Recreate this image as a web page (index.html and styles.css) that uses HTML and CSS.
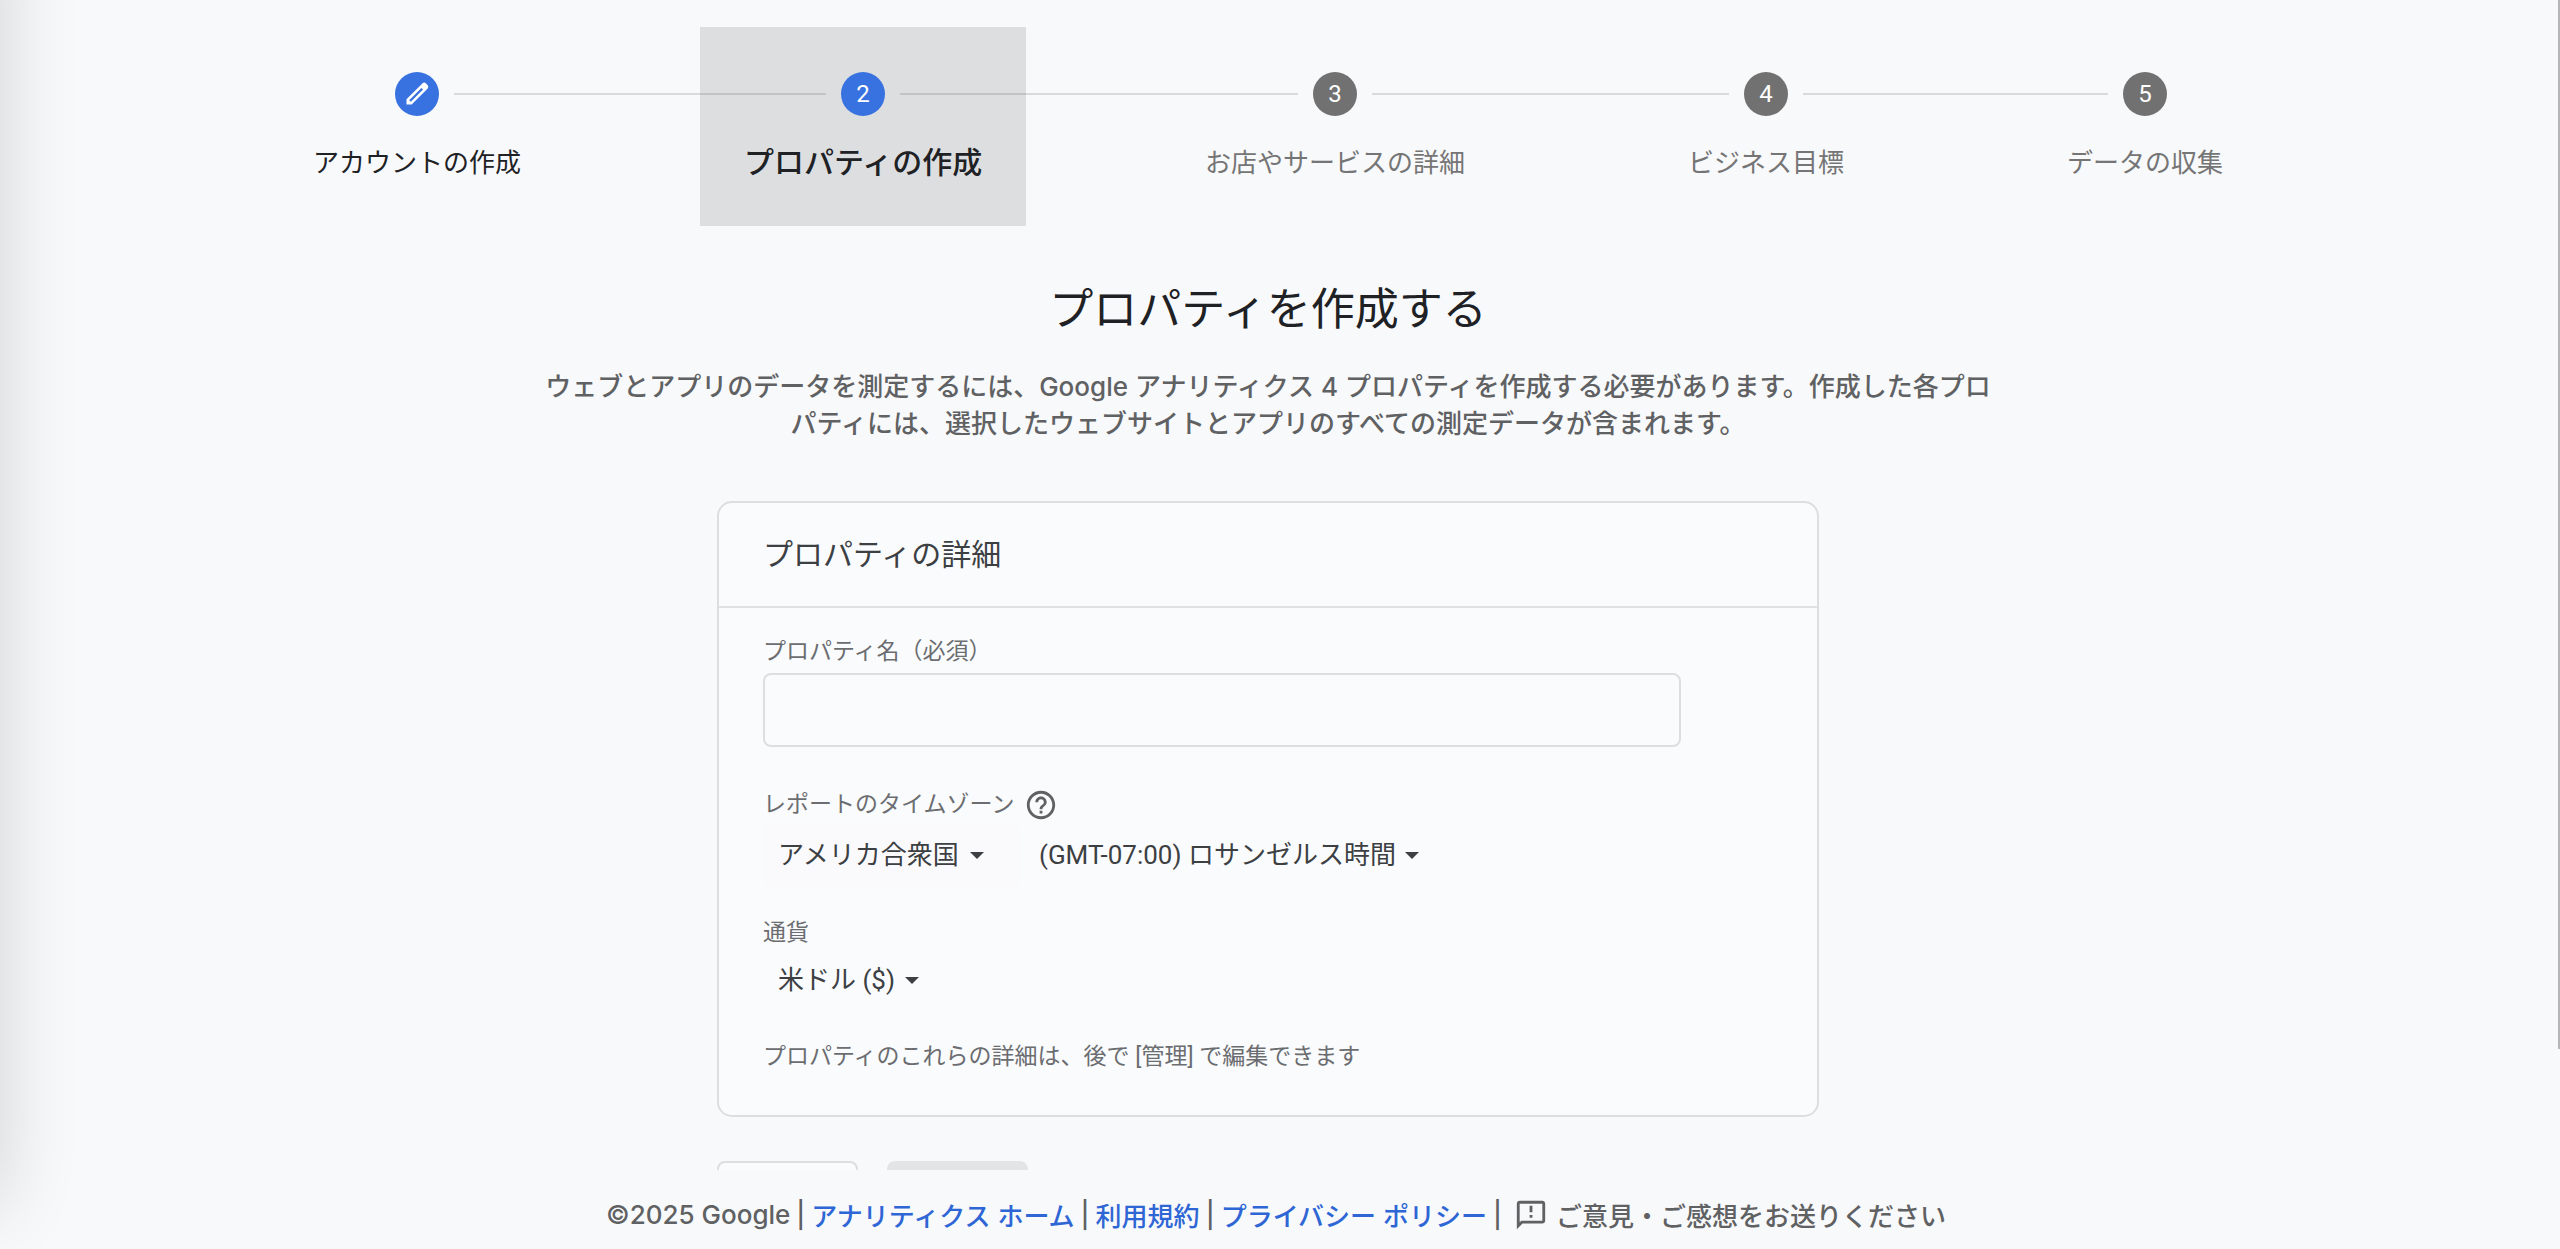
FILE: index.html
```html
<!DOCTYPE html>
<html lang="ja">

<head>
    <meta charset="UTF-8">
    <meta name="viewport" content="width=device-width, initial-scale=1.0">
    <title>プロパティの作成</title>
    <link rel="stylesheet" href="styles.css">
</head>

<body>
    <div class="side-shadow"></div>
    <div class="scroll-thumb"></div>

    <main class="main">
        <!-- ステッパー -->
        <ol class="stepper">
            <li class="step done">
                <div class="track">
                    <span class="circle">
                        <svg viewBox="0 0 24 24" width="28" height="28">
                            <path d="M3 21v-4.400L16.600 3a2.200 2.200 0 0 1 3.100 0l1.300 1.300a2.200 2.200 0 0 1 0 3.100L7.400 21z" fill="#fff" />
                            <path d="M6 18L16.500 7.500" stroke="#3871e0" stroke-width="2" />
                        </svg>
                    </span>
                </div>
                <div class="label">アカウントの作成</div>
            </li>
            <li class="connector"></li>
            <li class="step active">
                <div class="track"><span class="circle">2</span></div>
                <div class="label">プロパティの作成</div>
            </li>
            <li class="connector"></li>
            <li class="step">
                <div class="track"><span class="circle">3</span></div>
                <div class="label">お店やサービスの詳細</div>
            </li>
            <li class="connector"></li>
            <li class="step">
                <div class="track"><span class="circle">4</span></div>
                <div class="label">ビジネス目標</div>
            </li>
            <li class="connector"></li>
            <li class="step">
                <div class="track"><span class="circle">5</span></div>
                <div class="label">データの収集</div>
            </li>
        </ol>

        <h1 class="title">プロパティを作成する</h1>
        <p class="description">ウェブとアプリのデータを測定するには、Google アナリティクス 4 プロパティを作成する必要があります。作成した各プロ<br>パティには、選択したウェブサイトとアプリのすべての測定データが含まれます。</p>

        <form class="form">
            <div class="card">
                <h2 class="card-title">プロパティの詳細</h2>
                <div class="card-body">
                    <label class="field-label" for="name">プロパティ名（必須）</label>
                    <input class="text-input" id="name" type="text">

                    <div class="timezone-label">
                        <label class="field-label" for="country">レポートのタイムゾーン</label>
                        <svg viewBox="0 0 24 24" width="34" height="34" fill="#5f6163">
                            <path d="M11 18h2v-2h-2v2zm1-16C6.480 2 2 6.480 2 12s4.480 10 10 10 10-4.480 10-10S17.520 2 12 2zm0 18c-4.410 0-8-3.590-8-8s3.590-8 8-8 8 3.590 8 8-3.590 8-8 8zm0-14c-2.210 0-4 1.790-4 4h2c0-1.100.9-2 2-2s2 .9 2 2c0 2-3 1.750-3 5h2c0-2.250 3-2.500 3-5 0-2.210-1.790-4-4-4z" />
                        </svg>
                    </div>
                    <div class="select-row">
                        <div class="select-box filled">
                            <select id="country">
                                <option>アメリカ合衆国</option>
                            </select>
                        </div>
                        <div class="select-box">
                            <select aria-label="タイムゾーン">
                                <option>(GMT-07:00) ロサンゼルス時間</option>
                            </select>
                        </div>
                    </div>

                    <label class="field-label" for="currency">通貨</label>
                    <div class="select-row currency">
                        <div class="select-box">
                            <select id="currency">
                                <option>米ドル ($)</option>
                            </select>
                        </div>
                    </div>

                    <p class="hint">プロパティのこれらの詳細は、後で [管理] で編集できます</p>
                </div>
            </div>
            <div class="actions">
                <button class="btn" type="button" aria-label="戻る"></button>
                <button class="btn next" type="button" aria-label="次へ" disabled></button>
            </div>
        </form>
    </main>

    <!-- フッター -->
    <footer class="footer">
        <span>©2025 Google</span>
        <span>|</span>
        <a href="#">アナリティクス ホーム</a>
        <span>|</span>
        <a href="#">利用規約</a>
        <span>|</span>
        <a href="#">プライバシー ポリシー</a>
        <span>|</span>
        <button class="feedback" type="button">
            <svg viewBox="0 0 24 24" width="34" height="34" fill="#5f6163">
                <path d="M20 2H4c-1.100 0-1.990.9-1.990 2L2 22l4-4h14c1.100 0 2-.9 2-2V4c0-1.100-.9-2-2-2zm0 14H5.170L4 17.170V4h16v12zM11 5.500h2v4.500h-2zm0 6.500h2v2h-2z" />
            </svg>
            ご意見・ご感想をお送りください
        </button>
    </footer>
</body>

</html>
```
FILE: styles.css
```css
* {
    margin: 0;
    padding: 0;
    box-sizing: border-box;
    list-style: none;
}

body {
    height: 100vh;
    display: flex;
    flex-direction: column;
    overflow: hidden;
    background: #f8f9fb;
    color: #5f6163;
    font-family: Roboto, "Noto Sans CJK JP", sans-serif;
    font-size: 26px;
}

/* 左メニューの影 */
.side-shadow {
    position: fixed;
    top: -80px;
    bottom: 44px;
    left: -80px;
    width: 80px;
    box-shadow: 0 0 80px rgba(0, 0, 0, 0.16);
}

.scroll-thumb {
    position: fixed;
    top: 0;
    right: 0;
    width: 2px;
    height: 84%;
    background: #b5b6b8;
}

.main {
    flex: 1;
    min-height: 0;
    overflow: hidden;
    padding: 27px 24px 0 0;
}

.stepper {
    display: flex;
    max-width: 1998px;
    margin: 0 auto;
}

.step {
    padding-top: 45px;
    height: 199px;
    color: #757575;
}

.connector {
    flex: 1;
    height: 2px;
    margin-top: 66px;
    background: rgba(0, 0, 0, 0.12);
}

.track {
    display: flex;
    align-items: center;
    gap: 15px;
}

.track::before,
.track::after {
    content: '';
    flex: 1;
    height: 2px;
    background: rgba(0, 0, 0, 0.12);
}

/* 両端には線を出さない */
.step:first-child .track::before,
.step:last-child .track::after {
    background: none;
}

.circle {
    width: 44px;
    height: 44px;
    display: flex;
    align-items: center;
    justify-content: center;
    border-radius: 50%;
    background: #717171;
    color: #fff;
    font-size: 24px;
}

.done .circle,
.active .circle {
    background: #3871e0;
}

.label {
    padding: 26px 44px 0;
    line-height: 42px;
    white-space: nowrap;
}

.done .label {
    color: #202124;
}

.active {
    background: #dddee0;
}

.active .label {
    color: #202124;
    font-size: 30px;
    font-weight: 500;
}

.title {
    margin-top: 52px;
    color: #202124;
    font-size: 44px;
    font-weight: 400;
    line-height: 64px;
    text-align: center;
}

.description {
    margin-top: 26px;
    font-family: Inter, "Noto Sans CJK JP", sans-serif;
    font-weight: 500;
    line-height: 37px;
    text-align: center;
}

.form {
    max-width: 1102px;
    margin: 59px auto 0;
}

.card {
    border: 2px solid #dcdee0;
    border-radius: 15px;
    background: #fafbfd;
}

.card-title {
    padding: 0 44px;
    border-bottom: 2px solid #dfe1e3;
    color: #3c4043;
    font-size: 30px;
    font-weight: 400;
    line-height: 103px;
}

.card-body {
    padding: 26px 136px 40px 44px;
}

.field-label,
.hint {
    display: block;
    color: #6b6d70;
    font-size: 23px;
    line-height: 36px;
}

.text-input {
    display: block;
    width: 100%;
    height: 74px;
    margin-top: 3px;
    padding: 0 20px;
    border: 2px solid #dcdee0;
    border-radius: 8px;
    background: transparent;
    font: inherit;
}

.timezone-label {
    display: flex;
    align-items: center;
    gap: 10px;
    margin-top: 40px;
}

.select-row {
    display: flex;
    gap: 4px;
    margin: 0 0 28px;
}

.select-box {
    display: flex;
    align-items: center;
    gap: 9px;
    padding: 0 36px 0 15px;
    border-radius: 8px;
}

.select-box.filled {
    background: #fafafc;
}

.select-box::after {
    content: '';
    border: 7px solid transparent;
    border-top-color: #3c4043;
    border-bottom: none;
}

.select-box select {
    height: 64px;
    border: none;
    background: none;
    appearance: none;
    color: #3c4043;
    font: inherit;
}

.select-row.currency {
    margin: 0 0 30px;
}

.currency select {
    height: 58px;
}

.actions {
    display: flex;
    gap: 29px;
    margin-top: 44px;
}

.btn {
    width: 141px;
    height: 58px;
    border: 2px solid #dcdee0;
    border-radius: 8px;
    background: #fafbfd;
}

.btn.next {
    border-color: #e3e4e6;
    background: #e3e4e6;
}

.footer {
    display: flex;
    align-items: center;
    justify-content: center;
    gap: 6px;
    height: 79px;
    padding: 10px 8px 0 0;
    font-family: Inter, "Noto Sans CJK JP", sans-serif;
    font-weight: 500;
}

.footer a {
    color: #2f66d5;
    text-decoration: none;
}

.feedback {
    display: flex;
    align-items: center;
    gap: 8px;
    margin-left: 6px;
    border: none;
    background: none;
    color: inherit;
    font: inherit;
}
```
